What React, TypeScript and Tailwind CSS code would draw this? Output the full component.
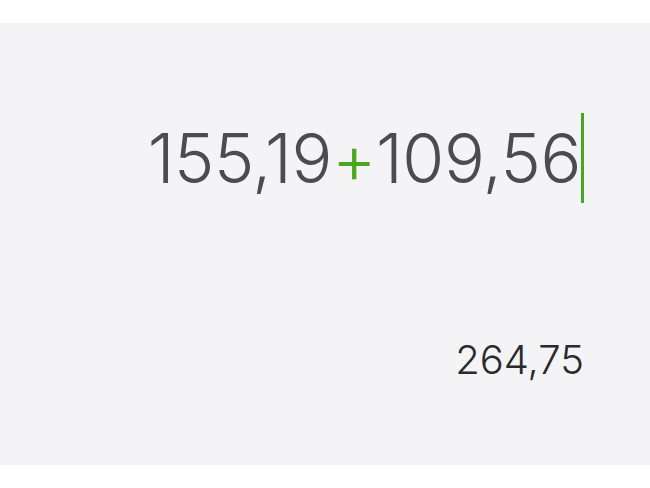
export default function App() {
  return (
    <div className="h-[488px] w-[650px] bg-white flex flex-col" style={{ fontFamily: 'Inter, "Noto Sans", sans-serif' }}>
      <div className="h-[23px] bg-white" />
      <div className="h-[442px] bg-[#f4f4f6] flex flex-col items-end pr-[66px]">
        <div className="mt-[90px] flex items-center h-[90px]">
          <span className="text-[68px] leading-none font-light text-[#4b4b50] tracking-[-0.4px]">
            155,19<span className="text-[#4aa520]">+</span>109,56
          </span>
          <span className="w-[3px] h-[90px] bg-[#4aa520]" />
        </div>
        <div className="mt-[137px] text-[40px] leading-none font-light text-[#2a2a2e]">264,75</div>
      </div>
    </div>
  )
}
